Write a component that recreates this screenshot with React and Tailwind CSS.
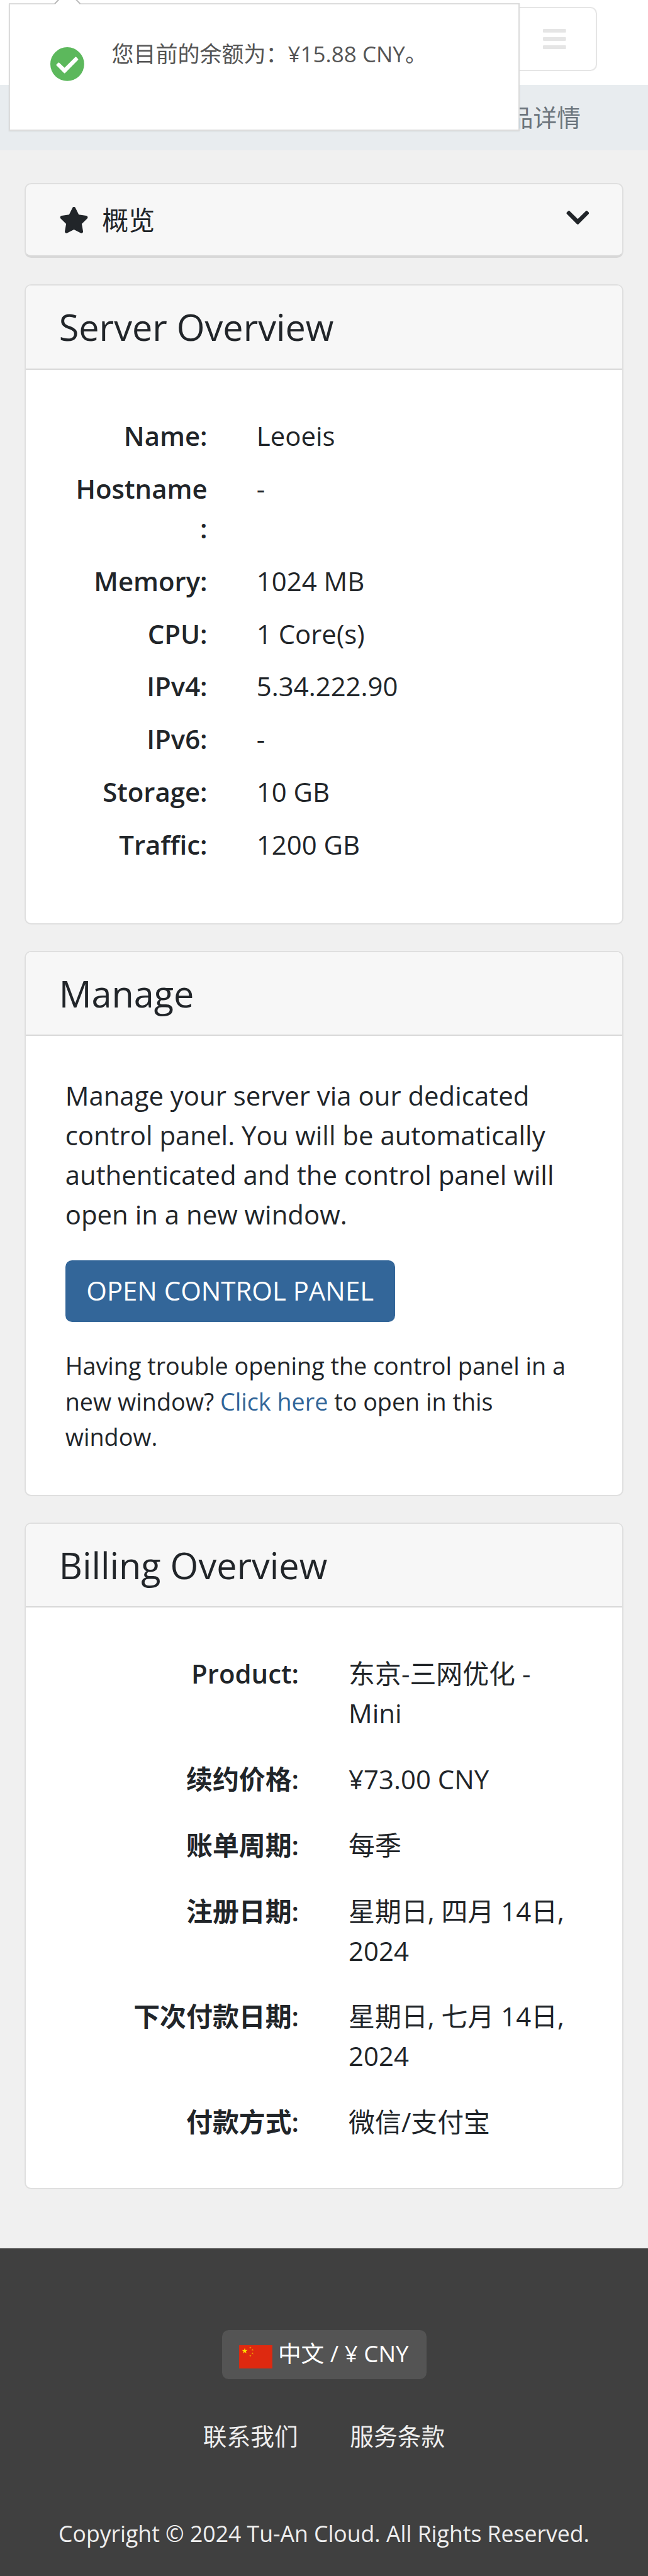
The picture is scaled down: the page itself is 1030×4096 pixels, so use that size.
import React from "react";
import { FaStar, FaChevronDown, FaBars } from "react-icons/fa";

const server = [
  ["Name:", "Leoeis"],
  ["Hostname:", "-"],
  ["Memory:", "1024 MB"],
  ["CPU:", "1 Core(s)"],
  ["IPv4:", "5.34.222.90"],
  ["IPv6:", "-"],
  ["Storage:", "10 GB"],
  ["Traffic:", "1200 GB"],
];

const billing = [
  ["Product:", "东京-三网优化 - Mini"],
  ["续约价格:", "¥73.00 CNY"],
  ["账单周期:", "每季"],
  ["注册日期:", "星期日, 四月 14日, 2024"],
  ["下次付款日期:", "星期日, 七月 14日, 2024"],
  ["付款方式:", "微信/支付宝"],
];

function Card({ title, className, children }) {
  return (
    <section className={`overflow-hidden rounded-[10.5px] border-2 border-[#dfdfdf] bg-white ${className}`}>
      <h3 className="flex h-[133.5px] items-center border-b-2 border-[#d8d8d8] bg-[#f7f7f7] pl-[52.4px] text-[57.6px] leading-none">
        {title}
      </h3>
      {children}
    </section>
  );
}

function Toast() {
  return (
    <div className="absolute left-[14px] top-[4.5px] h-[203.5px] w-[812px] border-2 border-[#dcdcdc] bg-white shadow-[0_1px_2px_rgba(0,0,0,0.08)]">
      <svg className="absolute -top-[32px] left-[69.5px]" width="44" height="34" viewBox="0 0 44 34">
        <path d="M0 33 L21.2 11 L42.4 33 Z" fill="#fff" />
        <path d="M1 31 L21.2 10 L41.4 31" fill="none" stroke="#bbb" strokeWidth="2" />
      </svg>
      <div className="flex pl-[64.2px] pt-[47px]">
        <svg className="mt-[21.7px] shrink-0" width="53.8" height="53.8" viewBox="73 57 169 169">
          <circle cx="157.5" cy="141.5" r="84.5" fill="#5cb85c" />
          <path
            d="M106 146 L115 137 L144 165 L200 109 L209 118 L144 184 Z"
            fill="#fff"
            stroke="#fff"
            strokeWidth="7"
            strokeLinejoin="round"
          />
        </svg>
        <p className="ml-[43.6px] text-[35px] leading-[63px] text-[#555]">您目前的余额为：¥15.88 CNY。</p>
      </div>
    </div>
  );
}

function Flag() {
  const star = "M0 -1 L0.225 -0.31 L0.951 -0.31 L0.363 0.118 L0.588 0.809 L0 0.382 L-0.588 0.809 L-0.363 0.118 L-0.951 -0.31 L-0.225 -0.31 Z";
  return (
    <svg className="mt-[6px] shrink-0" width="53" height="37" viewBox="0 0 55 38.5">
      <rect width="55" height="38.5" fill="#de2910" />
      <path d={star} transform="translate(9.3 9.6) scale(5)" fill="#ffde00" />
      <g fill="#f0a000">
        <path d={star} transform="translate(18.5 4) scale(2)" />
        <path d={star} transform="translate(22.2 7.8) scale(2)" />
        <path d={star} transform="translate(22.2 13.6) scale(2)" />
        <path d={star} transform="translate(18.5 17.4) scale(2)" />
      </g>
    </svg>
  );
}

export default function App() {
  return (
    <div
      lang="zh-CN"
      className="relative h-[4096px] w-[1030px] overflow-hidden bg-[#f0f0f0] font-['Open_Sans','Noto_Sans_CJK_SC',sans-serif] text-[41.92px] leading-[62.87px] text-[#212529]"
    >
      <header className="flex h-[135.3px] justify-end bg-white pr-[81.5px] pt-[10.5px]">
        <button className="flex h-[102.7px] w-[134px] items-center justify-center rounded-[10.5px] border-2 border-[#e5e5e5] text-[#e5e5e5]">
          <FaBars className="h-[41.9px] w-[36.7px]" />
        </button>
      </header>
      <nav className="flex h-[103.5px] items-center justify-end bg-[#e8ecef] pr-[107px] text-[37.73px] text-[#6c757d]">
        产品详情
      </nav>
      <Toast />

      <main className="h-[3336.4px] px-[39.3px] pt-[52.7px]">
        <div className="flex h-[119px] items-center rounded-[10.5px] border-2 border-b-[4px] border-[#dfdfdf] border-b-[#d8d8d8] bg-[#f7f7f7] px-[52.4px]">
          <FaStar className="h-[41.9px] w-[47.1px]" />
          <span className="ml-[21.5px]">概览</span>
          <FaChevronDown className="-mt-[8px] ml-auto h-[41.9px] w-[36.7px]" />
        </div>

        <Card title="Server Overview" className="mt-[42px] h-[1018px]">
          <div className="pt-[63.9px]">
            {server.map(([k, v]) => (
              <div key={k} className="flex py-[10.48px]">
                <div className="ml-[73.3px] w-[215px] text-right font-semibold [overflow-wrap:anywhere]">{k}</div>
                <div className="ml-[78.2px]">{v}</div>
              </div>
            ))}
          </div>
        </Card>

        <Card title="Manage" className="mt-[41.2px] h-[867px]">
          <div className="px-[62.4px] pt-[63.9px]">
            <p className="w-[800px]">
              Manage your server via our dedicated control panel. You will be automatically authenticated and the
              control panel will open in a new window.
            </p>
            <button className="mt-[41px] block h-[98px] w-[524px] rounded-[10.5px] bg-[#336699] text-center text-white">
              OPEN CONTROL PANEL
            </button>
            <p className="mt-[42.4px] w-[800px] text-[37.73px] leading-[56.6px]">
              Having trouble opening the control panel in a new window?{" "}
              <a className="text-[#336699]">Click here</a> to open in this window.
            </p>
          </div>
        </Card>

        <Card title="Billing Overview" className="mt-[42.1px] h-[1059.8px]">
          <div className="flex flex-col gap-[41.9px] pt-[74.2px]">
            {billing.map(([k, v]) => (
              <div key={k} className="flex">
                <div className="w-[433.8px] text-right font-semibold">{k}</div>
                <div className="ml-[79px] w-[366px]">{v}</div>
              </div>
            ))}
          </div>
        </Card>
      </main>

      <footer className="flex h-[520.8px] flex-col items-center bg-[#404040] pt-[130.3px] text-[#eee]">
        <button className="flex h-[77.1px] w-[325px] items-center rounded-[10.5px] bg-[#545454] pl-[27px] text-[36.7px] text-white">
          <Flag />
          <span className="-mt-[3px] ml-[9.4px] whitespace-nowrap">中文 / ¥ CNY</span>
        </button>
        <div className="mt-[63px] flex gap-[82.6px] text-[37.73px] leading-[56.6px]">
          <a>联系我们</a>
          <a>服务条款</a>
        </div>
        <p className="mt-[98.6px] whitespace-nowrap text-[35.6px] leading-[55px]">
          Copyright © 2024 Tu-An Cloud. All Rights Reserved.
        </p>
      </footer>
    </div>
  );
}
